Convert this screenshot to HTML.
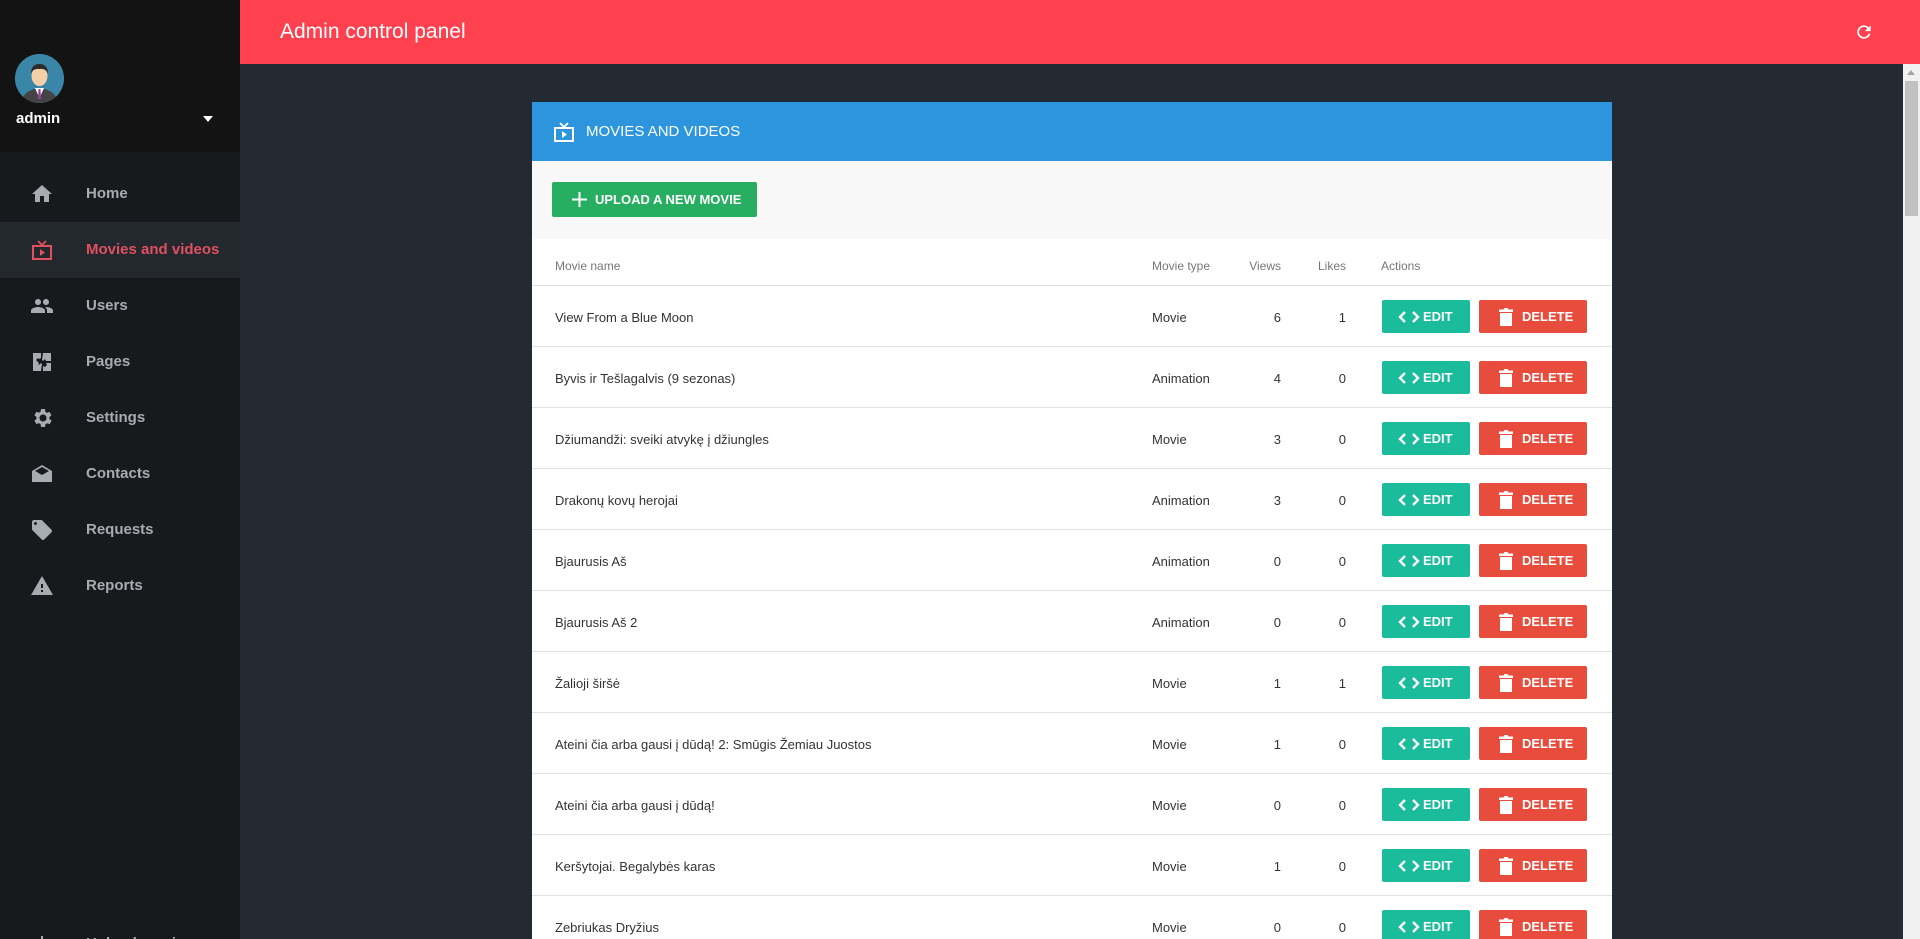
<!DOCTYPE html>
<html><head><meta charset="utf-8"><style>
*{margin:0;padding:0;box-sizing:border-box}
html,body{width:1920px;height:939px;overflow:hidden;background:#232a32;font-family:"Liberation Sans",sans-serif;position:relative}
#side{position:absolute;left:0;top:0;width:240px;height:939px;background:#18191c;overflow:hidden}
#user{position:absolute;left:0;top:0;width:240px;height:152px;background:#131313}
.av{position:absolute;left:15px;top:54px;width:49px;height:49px;border-radius:50%;background:#3f7fa0;overflow:hidden}
.uname{position:absolute;left:16px;top:110px;color:#fff;font-size:15px;font-weight:bold}
.caret{position:absolute;left:203px;top:116px;width:0;height:0;border-left:5px solid transparent;border-right:5px solid transparent;border-top:6px solid #fff}
.nav{position:absolute;left:0;width:240px;height:56px;color:#a7acb2;font-size:15px;font-weight:bold}
.nav span{position:absolute;left:86px;top:19px}
.nav svg{position:absolute;left:30px;top:16px}
.nav.act{background:#22282e;color:#e0505e}
#top{position:absolute;left:240px;top:0;width:1680px;height:64px;background:#ff404f}
#top .t{position:absolute;left:40px;top:20px;color:#fff;font-size:21px}
#sb{position:absolute;left:1903px;top:64px;width:17px;height:875px;background:#f1f1f1}
#sb .th{position:absolute;left:2px;top:17px;width:13px;height:135px;background:#c1c1c1}
#sb .ar{position:absolute;left:4px;top:6px;border-left:4.5px solid transparent;border-right:4.5px solid transparent;border-bottom:5px solid #a3a3a3}
#card{position:absolute;left:532px;top:102px;width:1080px;height:837px;background:#fff;overflow:hidden}
#ch{height:59px;background:#2d95de;position:relative;color:#fff;font-size:15px}
#ch span{position:absolute;left:54px;top:21px}
#tb{height:78px;background:#f8f8f8;position:relative}
.up{position:absolute;left:20px;top:21px;width:205px;height:35px;background:#27ae60;border-radius:2px;color:#fff;font-weight:bold;font-size:13px}
.up span{position:absolute;left:43px;top:10px}
.row{position:relative;height:61px;border-bottom:1px solid #e2e2e2;font-size:13px;color:#333}
.hd{height:47px;color:#777;font-size:12px;border-bottom:1px solid #ddd}
.c{position:absolute;top:24px}
.hd .c{top:20px}
.n{left:23px}.ty{left:620px}.v{right:331px;text-align:right}.l{right:266px;text-align:right}.ac{left:849px}
.b{position:absolute;top:14px;height:33px;border-radius:2px;color:#fff;font-weight:bold;font-size:13px}
.e{left:850px;width:88px;background:#1abc9c}
.d{left:947px;width:108px;background:#e74c3c}
.b span{position:absolute;top:9px}
.e span{left:41px}.d span{left:43px}
.b svg{position:absolute}
</style></head><body>
<div id="side">
<div id="user">
<div class="av"><svg width="49" height="49" viewBox="0 0 49 49"><circle cx="24.5" cy="24.5" r="24.5" fill="#3a86a8"/><path d="M6 49 Q8 36 24.5 34 Q41 36 43 49Z" fill="#444"/><path d="M20 34 L24.5 44 L29 34Z" fill="#fff"/><path d="M23.5 35 L25.5 35 L26 45 L23 45Z" fill="#9b3f9f"/><ellipse cx="24.5" cy="22" rx="8" ry="10" fill="#f4cfa8"/><path d="M16 20 Q16 10 24.5 10 Q33 10 33 20 Q31 14 24.5 15 Q18 14 16 20Z" fill="#2b2b2b"/></svg></div>
<div class="uname">admin</div><div class="caret"></div>
</div>
<div class="nav" style="top:166px"><svg width="24" height="24" viewBox="0 0 24 24"><path fill="#a7acb2" d="M10 20v-6h4v6h5v-8h3L12 3 2 12h3v8z"/></svg><span>Home</span></div>
<div class="nav act" style="top:222px"><svg width="24" height="24" viewBox="0 0 24 24"><path fill="none" stroke="#e0505e" stroke-width="2" d="M3 8h18v13H3z"/><path d="M8 3l4 4 4-4" fill="none" stroke="#e0505e" stroke-width="1.8"/><path d="M10 11v7l5-3.5z" fill="#e0505e"/></svg><span>Movies and videos</span></div>
<div class="nav" style="top:278px"><svg width="24" height="24" viewBox="0 0 24 24"><path fill="#a7acb2" d="M16 11c1.7 0 3-1.3 3-3s-1.3-3-3-3-3 1.3-3 3 1.3 3 3 3zm-8 0c1.7 0 3-1.3 3-3S9.7 5 8 5 5 6.3 5 8s1.3 3 3 3zm0 2c-2.3 0-7 1.2-7 3.5V19h14v-2.5C15 14.2 10.3 13 8 13zm8 0c-.3 0-.6 0-1 .1 1.2.8 2 2 2 3.4V19h6v-2.5c0-2.3-4.7-3.5-7-3.5z"/></svg><span>Users</span></div>
<div class="nav" style="top:334px"><svg width="24" height="24" viewBox="0 0 24 24"><path fill="#a7acb2" d="M3 3h8v5L9 9l-1-1-2 2 3 3-1 1 2 2-1 1H3zm10 0h8v8h-5l-1-2-2 2-1-1zm8 10v8h-8v-5l2 1 2-2-1-2zm-10 8H3v-8h5l1 2 2-2 1 1z"/></svg><span>Pages</span></div>
<div class="nav" style="top:390px"><svg width="24" height="24" viewBox="0 0 24 24"><path fill="#a7acb2" d="M19.4 13c0-.3.1-.6.1-1s0-.7-.1-1l2.1-1.6-2-3.5-2.5 1c-.5-.4-1.1-.7-1.7-1L15 3h-4l-.4 2.7c-.6.2-1.200.6-1.7 1l-2.5-1-2 3.5L6.5 11c0 .3-.1.6-.1 1s0 .7.1 1l-2.1 1.6 2 3.5 2.5-1c.5.4 1.1.7 1.7 1L11 21h4l.4-2.7c.6-.2 1.2-.6 1.7-1l2.5 1 2-3.5zM13 15.5c-1.9 0-3.5-1.6-3.5-3.5s1.6-3.5 3.5-3.5 3.5 1.6 3.5 3.5-1.6 3.5-3.5 3.5z"/></svg><span>Settings</span></div>
<div class="nav" style="top:446px"><svg width="24" height="24" viewBox="0 0 24 24"><path fill="#a7acb2" d="M22 9v11H2V9l10-6zm-10 4l7-4-7-4-7 4z"/></svg><span>Contacts</span></div>
<div class="nav" style="top:502px"><svg width="24" height="24" viewBox="0 0 24 24"><path fill="#a7acb2" d="M21.4 11.6l-9-9C12 2.2 11.6 2 11 2H4c-1.1 0-2 .9-2 2v7c0 .6.2 1.1.6 1.4l9 9c.4.4.9.6 1.4.6s1-.2 1.4-.6l7-7c.4-.4.6-.9.6-1.4s-.2-1-.6-1.4zM5.5 7C4.7 7 4 6.3 4 5.5S4.7 4 5.5 4 7 4.7 7 5.5 6.3 7 5.5 7z"/></svg><span>Requests</span></div>
<div class="nav" style="top:558px"><svg width="24" height="24" viewBox="0 0 24 24"><path fill="#a7acb2" d="M1 21h22L12 2zm12-3h-2v-2h2zm0-4h-2v-4h2z"/></svg><span>Reports</span></div>
<div class="nav" style="top:916px"><svg width="24" height="24" viewBox="0 0 24 24"><path fill="#a7acb2" d="M11 4h2v16h-2z"/></svg><span>Upload movie</span></div>
</div>
<div id="top"><div class="t">Admin control panel</div>
<svg style="position:absolute;left:1614px;top:22px" width="20" height="20" viewBox="0 0 24 24"><path fill="#fff" d="M17.6 6.4A8 8 0 1 0 19.7 14h-2.1A6 6 0 1 1 12 6c1.7 0 3.1.7 4.2 1.8L13 11h7V4z"/></svg></div>
<div id="sb"><div class="ar"></div><div class="th"></div></div>
<div id="card">
<div id="ch"><svg style="position:absolute;left:20px;top:18px" width="24" height="24" viewBox="0 0 24 24"><path fill="none" stroke="#fff" stroke-width="2" d="M3 8h18v13H3z"/><path d="M8 3l4 4 4-4" fill="none" stroke="#fff" stroke-width="1.8"/><path d="M10 11v7l5-3.5z" fill="#fff"/></svg><span>MOVIES AND VIDEOS</span></div>
<div id="tb"><div class="up"><svg style="position:absolute;left:20px;top:10px" width="15" height="15" viewBox="0 0 15 15"><path d="M6.5 0h2v15h-2zM0 6.5h15v2H0z" fill="#fff"/></svg><span>UPLOAD A NEW MOVIE</span></div></div>
<div class="row hd"><div class="c n">Movie name</div><div class="c ty">Movie type</div><div class="c v">Views</div><div class="c l">Likes</div><div class="c ac">Actions</div></div>
<div id="rows"></div>
</div>
<script>
var d=[["View From a Blue Moon","Movie",6,1],["Byvis ir Tešlagalvis (9 sezonas)","Animation",4,0],["Džiumandži: sveiki atvykę į džiungles","Movie",3,0],["Drakonų kovų herojai","Animation",3,0],["Bjaurusis Aš","Animation",0,0],["Bjaurusis Aš 2","Animation",0,0],["Žalioji širšė","Movie",1,1],["Ateini čia arba gausi į dūdą! 2: Smūgis Žemiau Juostos","Movie",1,0],["Ateini čia arba gausi į dūdą!","Movie",0,0],["Keršytojai. Begalybės karas","Movie",1,0],["Zebriukas Dryžius","Movie",0,0]];
var h="";d.forEach(function(r){h+='<div class="row"><div class="c n">'+r[0]+'</div><div class="c ty">'+r[1]+'</div><div class="c v">'+r[2]+'</div><div class="c l">'+r[3]+'</div><div class="b e"><svg style="left:16px;top:10px" width="22" height="14" viewBox="0 0 22 14"><path d="M7 2L2 7l5 5M15 2l5 5-5 5" fill="none" stroke="#fff" stroke-width="2.4"/></svg><span>EDIT</span></div><div class="b d"><svg style="left:20px;top:8px" width="14" height="18" viewBox="0 0 14 18"><path d="M0 1.5h4.5L5.5 0h3l1 1.5H14V4H0z M1 5h12v13H1z" fill="#fff"/></svg><span>DELETE</span></div></div>'});
document.getElementById("rows").innerHTML=h;
</script>
</body></html>
